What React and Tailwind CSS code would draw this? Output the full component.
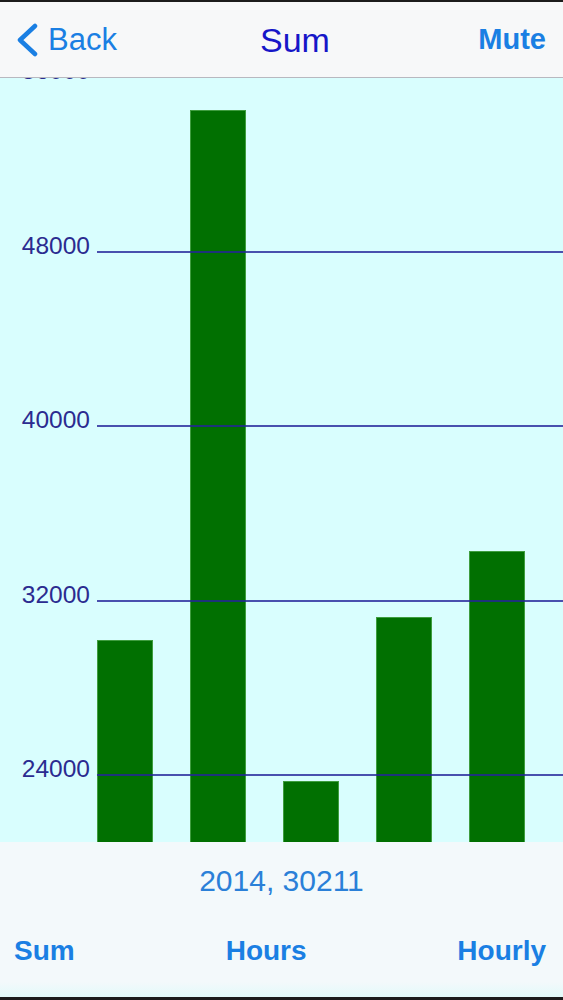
import React from "react";

const GRID = [
  { y: 0, label: "56000" },
  { y: 175, label: "48000" },
  { y: 349, label: "40000" },
  { y: 524, label: "32000" },
  { y: 698, label: "24000" },
];

const BARS = [
  { x: 97, top: 563 },
  { x: 190, top: 33 },
  { x: 283, top: 704 },
  { x: 376, top: 540 },
  { x: 469, top: 474 },
];

function Chart() {
  return (
    <svg width="563" height="765" viewBox="0 0 563 765" className="block">
      <rect x="0" y="0" width="563" height="765" fill="#d9fefe" />
      {BARS.map((b, i) => (
        <rect
          key={i}
          x={b.x + 0.5}
          y={b.top + 0.5}
          width="55"
          height={765 - b.top}
          fill="#017001"
          stroke="#3f9d3f"
          strokeWidth="1"
        />
      ))}
      {GRID.map((g, i) => (
        <g key={i}>
          <line x1="97" y1={g.y} x2="563" y2={g.y} stroke="#24249a" strokeOpacity="0.8" strokeWidth="2" />
          <text
            x="90"
            y={g.y + 2}
            textAnchor="end"
            fill="#2b2b90"
            fontSize="24.5"
            fontFamily="'Liberation Sans', Arial, sans-serif"
          >
            {g.label}
          </text>
        </g>
      ))}
    </svg>
  );
}

export default function App() {
  return (
    <div
      className="w-[563px] h-[1000px] flex flex-col overflow-hidden border-t-2 border-b-[3px] border-[#1c1c1c] bg-[#f3f9fb]"
      style={{ fontFamily: "'Liberation Sans', Arial, sans-serif" }}
    >
      <div className="relative z-10 h-[76px] shrink-0 flex items-center justify-between bg-[#f7f8f9] border-b border-[#b8b8c0] pl-[15px] pr-[17px]">
        <div className="flex items-center gap-[9px] text-[#1a7fe3]">
          <svg width="24" height="34" viewBox="0 0 24 34">
            <path d="M20 3 L5 17 L20 31" fill="none" stroke="#1a7fe3" strokeWidth="4.5" strokeLinecap="round" strokeLinejoin="round" />
          </svg>
          <span className="text-[31px] leading-none">Back</span>
        </div>
        <span className="absolute left-[260px] text-[34px] leading-none text-[#1616c8]">Sum</span>
        <span className="text-[29px] font-bold leading-none text-[#1a7fe3]">Mute</span>
      </div>
      <div className="shrink-0 h-[765px] -mt-[1px]">
        <Chart />
      </div>
      <div className="flex-1 flex flex-col bg-[#f3f9fb]">
        <div className="h-[78px] flex items-center justify-center text-[30px] text-[#2a80d8] pb-[1px]">
          2014, 30211
        </div>
        <div className="flex items-center pl-[14px] pr-[17px] text-[28px] font-bold text-[#1a7fe3] h-[62px]">
          <span>Sum</span>
          <span className="ml-[151px]">Hours</span>
          <span className="ml-auto">Hourly</span>
        </div>
        <div className="flex-1 bg-gradient-to-b from-[#f3f9fb] to-[#e2fafa]" />
      </div>
    </div>
  );
}
